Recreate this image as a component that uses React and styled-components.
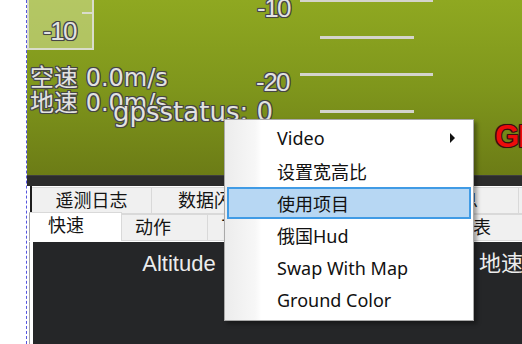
import React from "react";
import styled, { createGlobalStyle } from "styled-components";

const GlobalStyle = createGlobalStyle`
  html, body {
    margin: 0;
    padding: 0;
    width: 522px;
    height: 344px;
    overflow: hidden;
    background: #fff;
  }
  body {
    font-family: "Noto Sans", "Noto Sans CJK SC", sans-serif;
  }
`;

// HUD 글자 외곽선
const outline = (c) => `
  text-shadow: -1px -1px 0 ${c}, 1px -1px 0 ${c}, -1px 1px 0 ${c}, 1px 1px 0 ${c},
    0 1px 0 ${c}, 0 -1px 0 ${c}, 1px 0 0 ${c}, -1px 0 0 ${c}, 0 0 2px ${c};
`;

const Page = styled.div`
  position: relative;
  display: flex;
  width: 522px;
  height: 344px;
  overflow: hidden;
`;

const Gutter = styled.div`
  width: 26px;
  flex-shrink: 0;
  border-right: 1px dashed #5656de;
`;

const Main = styled.div`
  flex: 1;
  min-width: 0;
  display: flex;
  flex-direction: column;
`;

const Hud = styled.div`
  position: relative;
  height: 175px;
  flex-shrink: 0;
  overflow: hidden;
  background: linear-gradient(180deg, #8fa821 0%, #7f961c 50%, #6c7c16 100%);
`;

const SpeedBox = styled.div`
  position: absolute;
  left: 0;
  top: -12px;
  width: 67px;
  height: 62px;
  border: 2px solid #d9dccb;
  background: rgba(204, 218, 140, 0.62);
  box-sizing: border-box;
`;

const BoxTick = styled.div`
  position: absolute;
  left: 53px;
  top: 22px;
  width: 12px;
  height: 2px;
  background: #d9dccb;
`;

const HudLabel = styled.div`
  position: absolute;
  left: ${(p) => p.$x}px;
  top: ${(p) => p.$y}px;
  font-family: ${(p) =>
    p.$digits
      ? `"Liberation Sans", Arial, sans-serif`
      : `"DejaVu Sans", "Noto Sans CJK SC", sans-serif`};
  font-size: ${(p) => p.$size}px;
  letter-spacing: ${(p) => (p.$digits ? "-1.5px" : "0")};
  line-height: 1;
  white-space: nowrap;
  color: #e2e2e2;
  ${outline("#464646")}
`;

const PitchLine = styled.div`
  position: absolute;
  left: ${(p) => (p.$short ? 293 : 273)}px;
  top: ${(p) => p.$y}px;
  width: ${(p) => (p.$short ? 94 : 133)}px;
  height: 3px;
  background: #d4d4cc;
`;

const GpsWarn = styled.div`
  position: absolute;
  left: 468px;
  top: 121px;
  font-family: "Liberation Sans", Arial, sans-serif;
  font-weight: bold;
  font-size: 31px;
  line-height: 1;
  letter-spacing: -1px;
  color: #ee0b0b;
  ${outline("#3a1010")}
`;

const DarkBand = styled.div`
  height: 11px;
  flex-shrink: 0;
  background: #2c2c2c;
  border-top: 1px solid #3e3e3e;
  box-sizing: border-box;
`;

const TabRow = styled.div`
  display: flex;
  flex-shrink: 0;
  height: 27px;
  margin-left: ${(p) => p.$indent}px;
  border-left: ${(p) => (p.$edge ? "2px solid #1d1d1d" : "none")};
  white-space: nowrap;
`;

const Tab = styled.div`
  width: ${(p) => p.$w}px;
  flex-shrink: 0;
  box-sizing: border-box;
  height: ${(p) => (p.$active ? 29 : 27)}px;
  margin-top: ${(p) => (p.$active ? -1 : 1)}px;
  padding-left: ${(p) => p.$pad || 0}px;
  text-align: ${(p) => (p.$pad ? "left" : "center")};
  background: ${(p) => (p.$active ? "#ffffff" : "#f0f0f0")};
  border: 1px solid #d9d9d9;
  border-left: ${(p) => (p.$active ? "1px solid #a7a7a7" : "none")};
  border-bottom: ${(p) => (p.$active ? "none" : "1px solid #d9d9d9")};
  font-size: 18px;
  line-height: 25px;
  color: #141414;
  overflow: hidden;
`;

const TabBody = styled.div`
  flex: 1;
  display: flex;
  margin-left: 2px;
  margin-top: 2px;
  padding-left: 3px;
  border-left: 1px solid #a7a7a7;
`;

const QuickPanel = styled.div`
  flex: 1;
  display: grid;
  grid-template-columns: 292px 352px;
  align-content: start;
  padding-top: 11px;
  background: #252628;
  overflow: hidden;
`;

const QuickTitle = styled.div`
  text-align: center;
  font-family: "Liberation Sans", Arial, "Noto Sans CJK SC", sans-serif;
  font-size: 22px;
  line-height: 1;
  color: #ececec;
`;

const Menu = styled.div`
  position: absolute;
  left: 224px;
  top: 119px;
  width: 250px;
  box-sizing: border-box;
  padding: 2px 2px 4px 2px;
  border: 1px solid #a9a9a9;
  background: linear-gradient(90deg, #ececec 0px, #f7f7f7 30px, #fdfdfd 35px, #ffffff 36px);
  box-shadow: 3px 3px 4px rgba(0, 0, 0, 0.35);
`;

const MenuItem = styled.div`
  position: relative;
  display: flex;
  align-items: center;
  height: 32.4px;
  box-sizing: border-box;
  padding-left: 48px;
  border: 2px solid ${(p) => (p.$hover ? "#409be5" : "transparent")};
  background: ${(p) => (p.$hover ? "#b7d7f3" : "transparent")};
  font-size: 18px;
  color: #111;
  white-space: nowrap;
`;

const SubArrow = styled.span`
  position: absolute;
  right: 14px;
  top: 50%;
  margin-top: -5px;
  width: 0;
  height: 0;
  border-top: 5px solid transparent;
  border-bottom: 5px solid transparent;
  border-left: 5px solid #111;
`;

const menuItems = ["Video", "设置宽高比", "使用项目", "俄国Hud", "Swap With Map", "Ground Color"];

const App = () => {
  return (
    <>
      <GlobalStyle />
      <Page>
        <Gutter />
        <Main>
          <Hud>
            <SpeedBox>
              <BoxTick />
            </SpeedBox>
            <HudLabel $x={16} $y={18} $size={26} $digits>-10</HudLabel>

            <HudLabel $x={230} $y={-5} $size={26} $digits>-10</HudLabel>
            <HudLabel $x={229} $y={69} $size={26} $digits>-20</HudLabel>
            <PitchLine $y={-1} />
            <PitchLine $y={36} $short />
            <PitchLine $y={73} />
            <PitchLine $y={110} $short />

            <HudLabel $x={3} $y={66} $size={24}>空速 0.0m/s</HudLabel>
            <HudLabel $x={3} $y={91} $size={24}>地速 0.0m/s</HudLabel>
            <HudLabel $x={86} $y={99} $size={26}>gpsstatus: 0</HudLabel>
            <GpsWarn>GPS</GpsWarn>
          </Hud>
          <DarkBand />
          <TabRow $indent={3} $edge>
            <Tab $w={120}>遥测日志</Tab>
            <Tab $w={130} $pad={26}>数据闪存日志</Tab>
            <Tab $w={120}>脚本</Tab>
            <Tab $w={117}>消息</Tab>
            <Tab $w={100}>设置</Tab>
          </TabRow>
          <TabRow $indent={2}>
            <Tab $w={93} $pad={18} $active>快速</Tab>
            <Tab $w={86} $pad={13}>动作</Tab>
            <Tab $w={112} $pad={13}>飞行前</Tab>
            <Tab $w={122} $pad={13}>舵机</Tab>
            <Tab $w={100} $pad={13}>仪表</Tab>
          </TabRow>
          <TabBody>
            <QuickPanel>
              <QuickTitle>Altitude</QuickTitle>
              <QuickTitle>地速</QuickTitle>
            </QuickPanel>
          </TabBody>
        </Main>
        <Menu>
          {menuItems.map((label, index) => (
            <MenuItem key={index} $hover={index === 2}>
              {label}
              {index === 0 ? <SubArrow /> : null}
            </MenuItem>
          ))}
        </Menu>
      </Page>
    </>
  );
};

export default App;
